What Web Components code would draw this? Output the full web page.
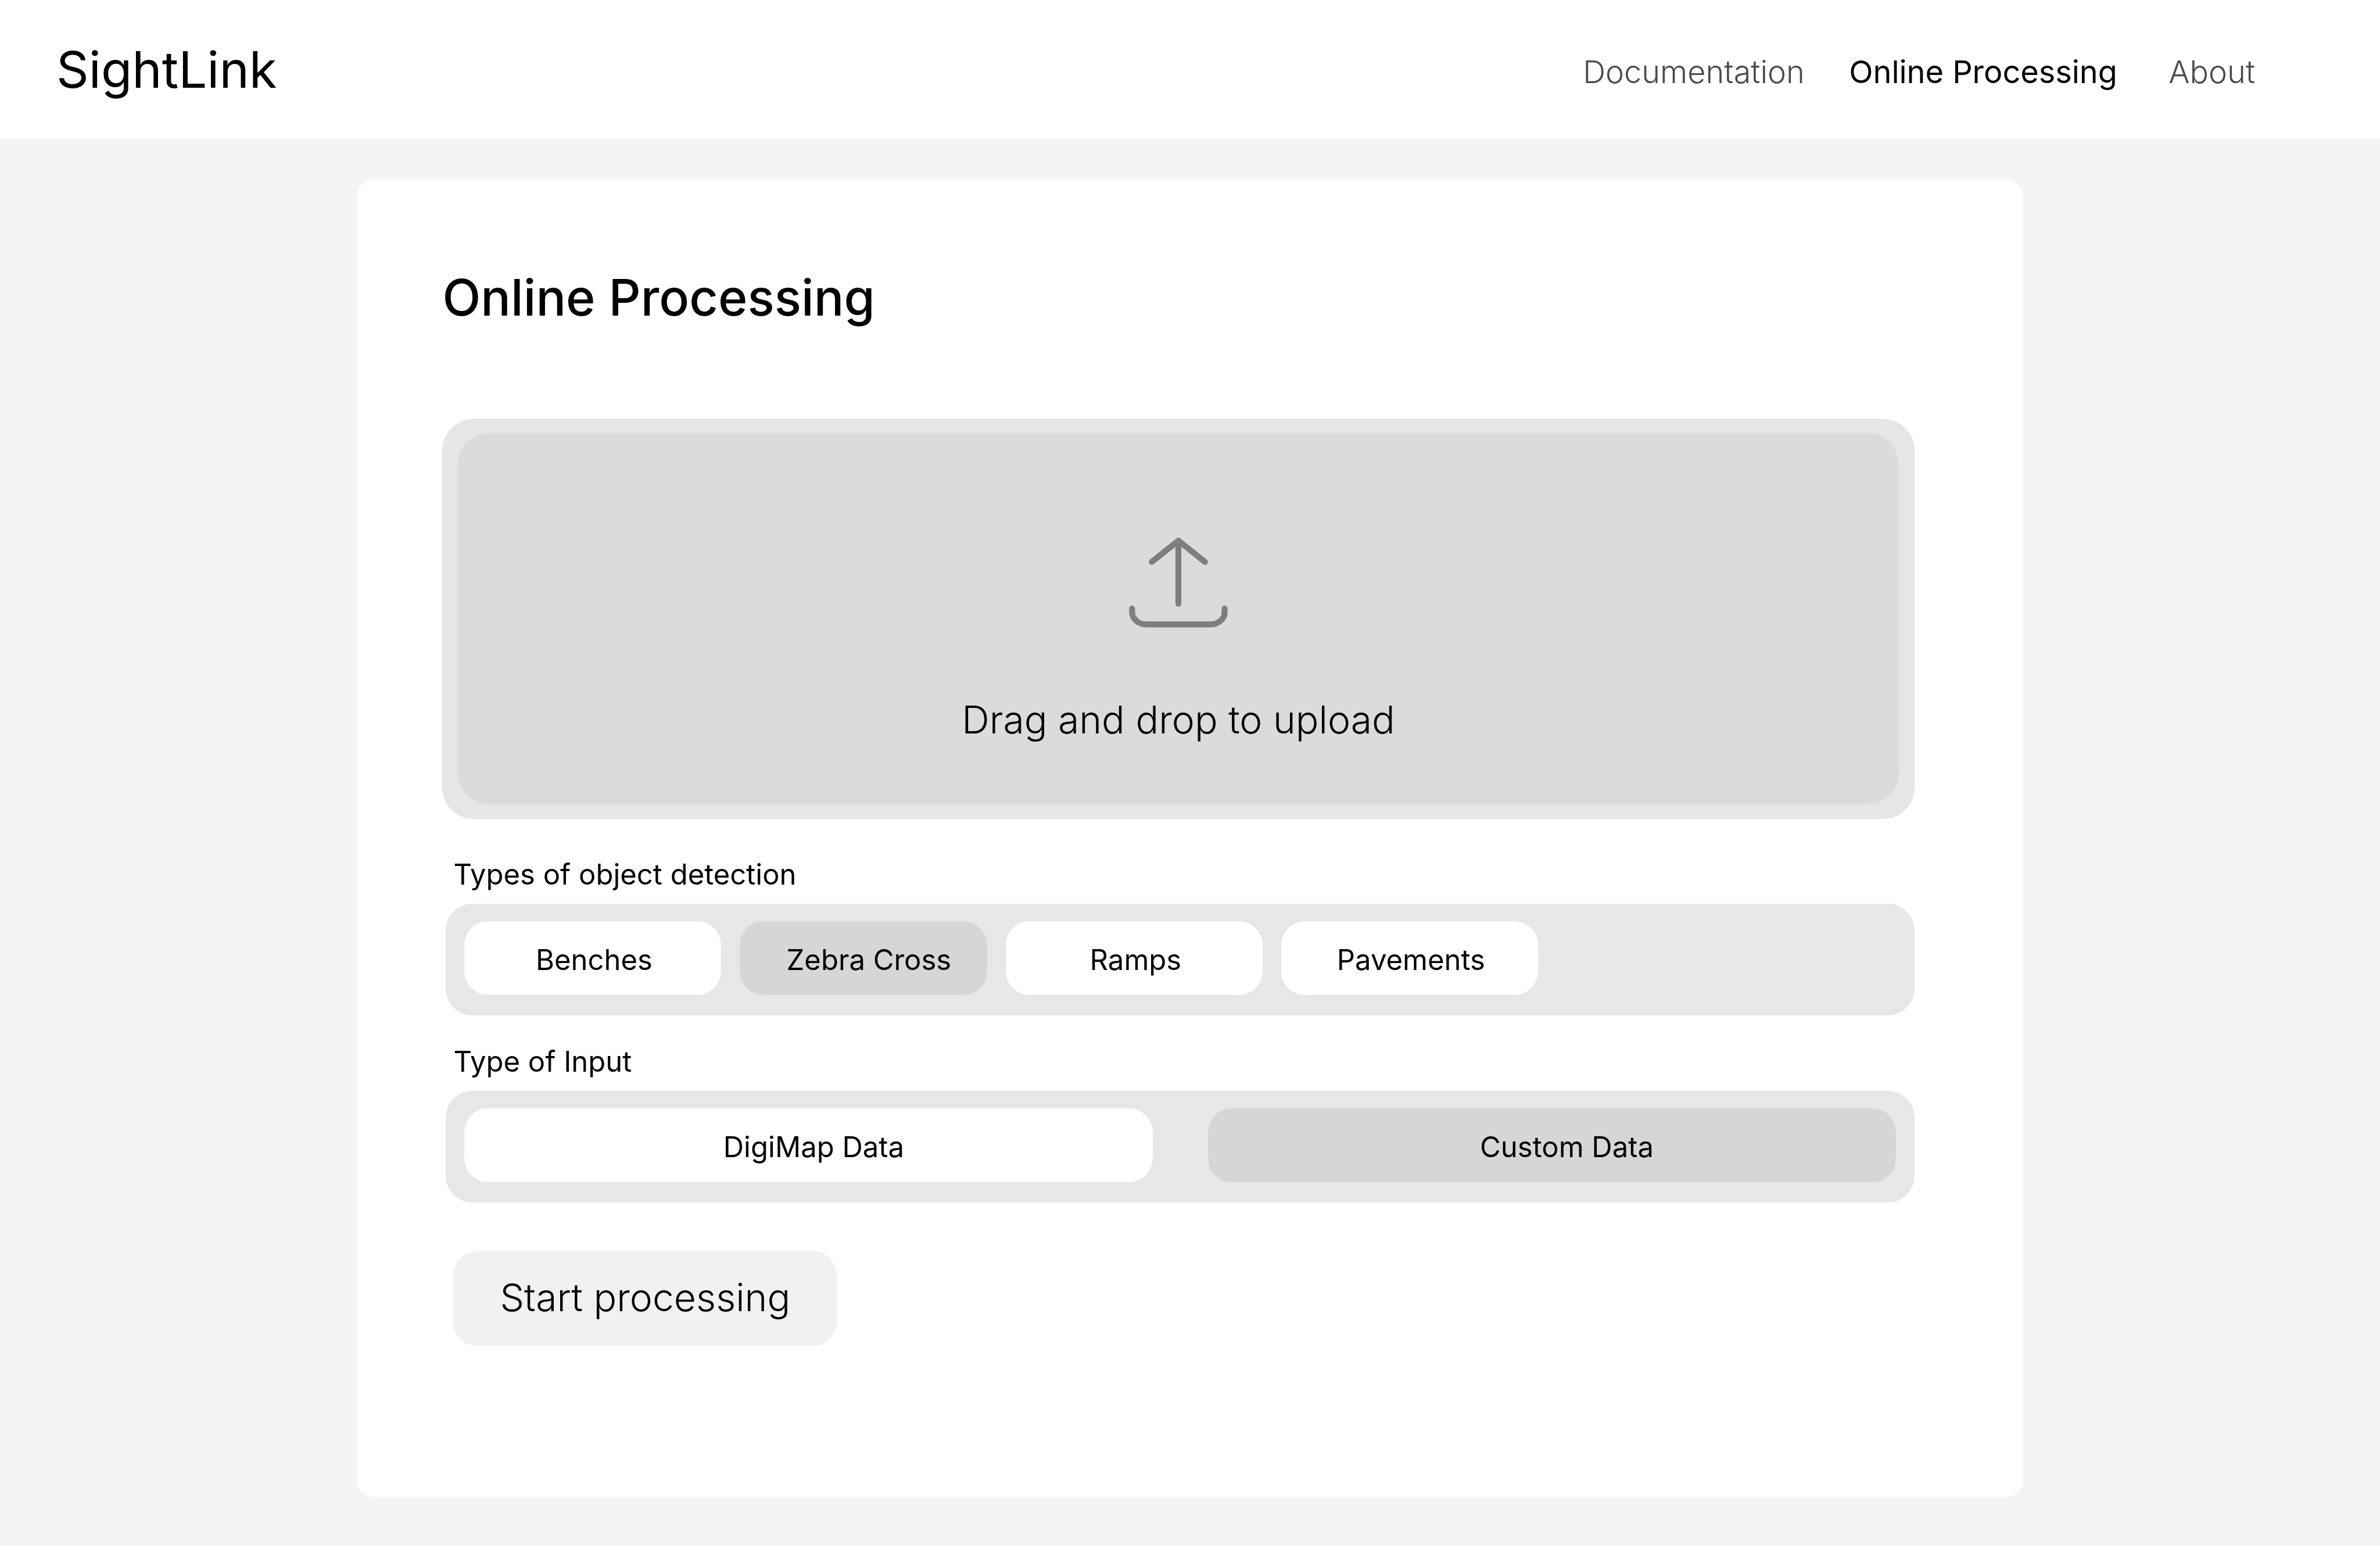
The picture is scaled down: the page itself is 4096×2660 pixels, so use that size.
<!DOCTYPE html>
<html lang="en">
<head>
<meta charset="utf-8">
<title>SightLink – Online Processing</title>
<style>
  body { margin: 0; min-height: 100vh; background: #f4f4f4; color: #000; font-family: Inter, "Liberation Sans", sans-serif; }
</style>
</head>
<body>
<sight-app></sight-app>

<script>
const define = (name, html, setup) => {
  const template = document.createElement('template');
  template.innerHTML = html;
  customElements.define(name, class extends HTMLElement {
    constructor() {
      super();
      this.attachShadow({ mode: 'open' }).append(template.content.cloneNode(true));
    }
    connectedCallback() { if (setup) setup(this, this.shadowRoot); }
  });
};

define('nav-link', `
  <style>
    :host { display: block; }
    a { color: #4a4a4a; font-size: 54px; line-height: 66px; font-weight: 300; text-decoration: none; white-space: nowrap; }
    :host([current]) a { color: #000; font-weight: 400; }
  </style>
  <a href="#"><slot></slot></a>`,
  (host, root) => { if (host.hasAttribute('current')) root.querySelector('a').setAttribute('aria-current', 'page'); });

define('site-header', `
  <style>
    :host { display: block; background: #fff; }
    header { display: flex; align-items: center; justify-content: space-between; min-height: 238px; padding: 0 215px 0 97px; box-sizing: border-box; }
    .logo { color: #000; font-size: 87px; line-height: 105px; text-decoration: none; }
    nav { display: grid; grid-template-columns: 458px 550px auto; padding-top: 10px; }
  </style>
  <header>
    <a class="logo" href="#">SightLink</a>
    <nav>
      <nav-link>Documentation</nav-link>
      <nav-link current>Online Processing</nav-link>
      <nav-link>About</nav-link>
    </nav>
  </header>`);

define('drop-zone', `
  <style>
    :host { display: block; padding: 24px 27px 25px; background: #e6e6e6; border-radius: 54px; }
    label { display: flex; flex-direction: column; align-items: center; gap: 119px; padding: 180px 0 106px; background: #dbdbdb; border-radius: 54px; cursor: pointer; }
    svg { display: block; width: 170px; height: 155px; fill: none; stroke: #7e7e7e; stroke-width: 34; stroke-linecap: round; stroke-linejoin: round; }
    span { font-size: 66px; line-height: 79px; font-weight: 300; }
    input { position: absolute; width: 1px; height: 1px; opacity: 0; }
  </style>
  <label>
    <svg viewBox="303 192 567 516" aria-hidden="true">
      <path d="M434 331 586.500 209 739 331M586.500 209V571"/>
      <path d="M321 599V621C321 659 359 690 405 690H768C814 690 852 659 852 621V599"/>
    </svg>
    <span><slot></slot></span>
    <input type="file">
  </label>`,
  (host, root) => {
    host.addEventListener('dragover', e => e.preventDefault());
    host.addEventListener('drop', e => {
      e.preventDefault();
      root.querySelector('input').files = e.dataTransfer.files;
    });
  });

define('choice-chip', `
  <style>
    :host { display: block; flex: 0 0 442px; }
    :host([narrow]) { flex-basis: 426px; }
    :host([fill]) { flex: 1 1 0; }
    button { display: block; width: 100%; height: 127px; margin: 0; padding: 6px 0 0 4px; border: 0; border-radius: 41px; background: #fff; color: inherit; font: 400 49px/60px Inter, "Liberation Sans", sans-serif; cursor: pointer; }
    :host([narrow]) button, :host([fill]) button { padding-left: 18px; }
    :host([fill][selected]) button { padding-left: 52px; }
    :host([selected]) button { background: #d6d6d6; }
  </style>
  <button type="button"><slot></slot></button>`,
  (host, root) => {
    const button = root.querySelector('button');
    button.setAttribute('aria-pressed', host.hasAttribute('selected'));
    button.addEventListener('click', () => button.setAttribute('aria-pressed', host.toggleAttribute('selected')));
  });

define('choice-group', `
  <style>
    :host { display: block; }
    .name { padding-left: 19px; font-size: 49px; line-height: 60px; }
    .track { display: flex; gap: 32px; margin: 20px 0 0 6px; padding: 30px 32px 35px; background: #e7e7e7; border-radius: 46px; }
    :host([split]) .track { gap: 95px; }
  </style>
  <div class="name" id="name"><slot name="name"></slot></div>
  <div class="track" role="group" aria-labelledby="name"><slot></slot></div>`);

define('action-button', `
  <style>
    :host { display: block; }
    button { padding: 40px 80px 44px; border: 0; border-radius: 41px; background: #f1f1f1; color: inherit; font: 300 66px/79px Inter, "Liberation Sans", sans-serif; cursor: pointer; }
  </style>
  <button type="button"><slot></slot></button>`);

define('page-card', `
  <style>
    :host { display: block; padding: 151px 187px 260px 147px; background: #fff; border-radius: 30px; }
    h1 { margin: 0 0 156px; font-size: 86px; line-height: 105px; font-weight: 500; }
  </style>
  <h1><slot name="title"></slot></h1>
  <slot></slot>`);

define('sight-app', `
  <style>
    :host { display: block; }
    main { padding: 71px 15% 84px; }
    .groups { display: grid; gap: 50px; margin: 66px 0 84px; }
    action-button { margin-left: 19px; }
  </style>
  <site-header></site-header>
  <main>
    <page-card>
      <span slot="title">Online Processing</span>
      <drop-zone>Drag and drop to upload</drop-zone>
      <div class="groups">
        <choice-group>
          <span slot="name">Types of object detection</span>
          <choice-chip>Benches</choice-chip>
          <choice-chip narrow selected>Zebra Cross</choice-chip>
          <choice-chip>Ramps</choice-chip>
          <choice-chip>Pavements</choice-chip>
        </choice-group>
        <choice-group split>
          <span slot="name">Type of Input</span>
          <choice-chip fill>DigiMap Data</choice-chip>
          <choice-chip fill selected>Custom Data</choice-chip>
        </choice-group>
      </div>
      <action-button>Start processing</action-button>
    </page-card>
  </main>`);
</script>
</body>
</html>
